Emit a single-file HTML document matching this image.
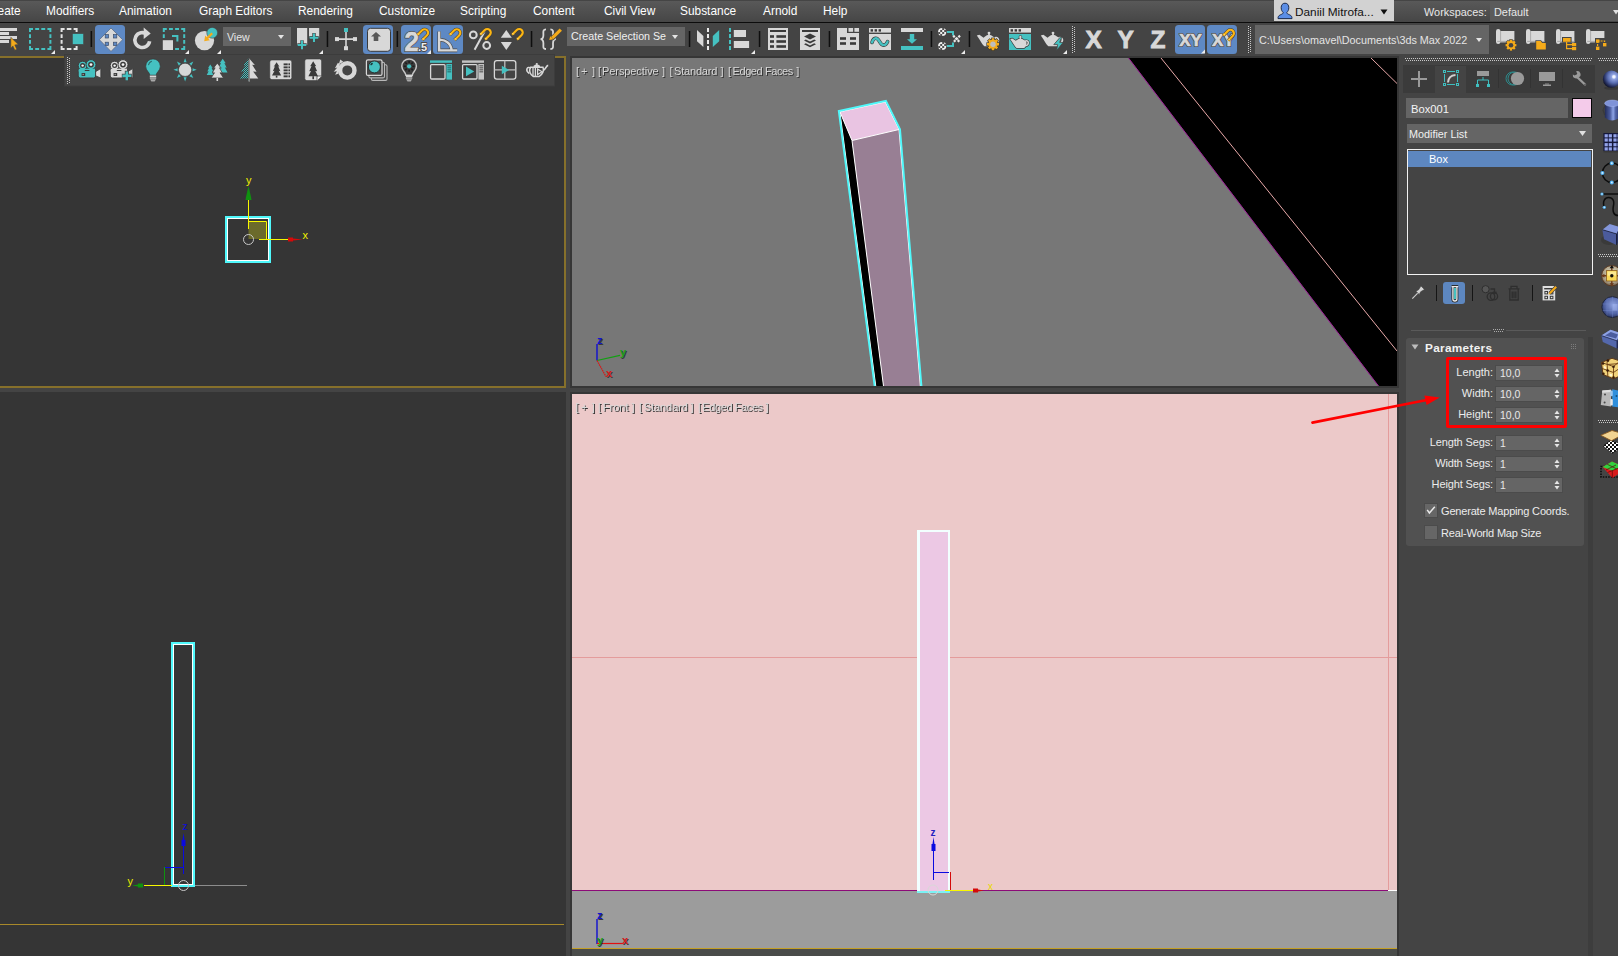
<!DOCTYPE html>
<html lang="en">
<head>
<meta charset="utf-8">
<title>3ds Max - Box Parameters</title>
<style>
html,body{margin:0;padding:0;}
body{width:1618px;height:956px;overflow:hidden;background:#444444;position:relative;
 font-family:"Liberation Sans",sans-serif;font-size:12px;color:#e6e6e6;}
.abs{position:absolute;}
#menubar{left:0;top:0;width:1618px;height:22px;background:linear-gradient(#454545 0px,#454545 1px,#595959 1px,#565656 4px,#464646 22px);}
#menuline{left:0;top:22px;width:1618px;height:1px;background:#0c0c0c;}
.mi{position:absolute;top:4px;font-size:11.9px;color:#ffffff;white-space:nowrap;line-height:15px;}
#user{left:1274px;top:0;width:120px;height:21px;background:#d2d2d2;color:#111;}
#user span{position:absolute;left:21px;top:5px;font-size:11.8px;line-height:15px;white-space:nowrap;}
#wsdd{left:1490px;top:1px;width:128px;height:20px;background:#5b5b5b;}
.dd{position:absolute;background:#656565;color:#e2e2e2;white-space:nowrap;overflow:hidden;}
.vp{position:absolute;overflow:hidden;}
.vlabel{position:absolute;font-size:11px;white-space:nowrap;line-height:13px;color:#d8d8d8;text-shadow:1px 1px 0 #333333;}
.vt{position:absolute;top:0;white-space:pre;}
.lbl{position:absolute;font-size:11px;color:#ececec;white-space:nowrap;line-height:13px;text-align:right;}
.spin{position:absolute;width:66px;height:14px;background:#656565;box-shadow:0 0 0 1px #4b4b4b;}
.spin span{position:absolute;left:4px;top:1px;font-size:10.5px;line-height:13px;color:#e8e8e8;}
svg{position:absolute;overflow:visible;}
</style>
</head>
<body>

<!-- ===== MENU BAR ===== -->
<div id="menubar" class="abs"></div>
<div id="menuline" class="abs"></div>
<div class="mi" style="left:-15px">Create</div>
<div class="mi" style="left:46px">Modifiers</div>
<div class="mi" style="left:119px">Animation</div>
<div class="mi" style="left:199px">Graph Editors</div>
<div class="mi" style="left:298px">Rendering</div>
<div class="mi" style="left:379px">Customize</div>
<div class="mi" style="left:460px">Scripting</div>
<div class="mi" style="left:533px">Content</div>
<div class="mi" style="left:604px">Civil View</div>
<div class="mi" style="left:680px">Substance</div>
<div class="mi" style="left:763px">Arnold</div>
<div class="mi" style="left:823px">Help</div>
<div id="user" class="abs"><span>Daniil Mitrofa...</span>
<svg width="16" height="18" viewBox="0 0 16 18" style="left:3px;top:2px"><path d="M8 1.200C10.600 1.200 11.800 3.200 11.800 5.600C11.800 8 10.800 9.600 9.800 10.400C9.800 11.600 10.600 12 12.600 12.800C14.400 13.600 15 14.600 15 16.600H1C1 14.600 1.600 13.600 3.400 12.800C5.400 12 6.200 11.600 6.200 10.400C5.200 9.600 4.200 8 4.200 5.600C4.200 3.200 5.400 1.200 8 1.200Z" fill="#5b8ee6" stroke="#1c2c50" stroke-width="1"/></svg>
<svg width="8" height="6" viewBox="0 0 8 6" style="left:106px;top:9px"><polygon points="0.500,0.500 7.500,0.500 4,5.500" fill="#101010"/></svg></div>
<div class="mi" style="left:1424px;top:5px;font-size:10.9px;color:#e8e8e8">Workspaces:</div>
<div id="wsdd" class="abs"><svg width="6" height="5" viewBox="0 0 6 5" style="left:123px;top:9px"><polygon points="0,0 6,0 3,4.500" fill="#e0e0e0"/></svg><span class="abs" style="left:4px;top:4px;font-size:10.9px;line-height:15px;color:#e8e8e8">Default</span></div>

<!-- ===== MAIN TOOLBAR ===== -->
<!--TB-START-->
<svg id="tb" width="1618" height="33" viewBox="0 23 1618 33" style="left:0;top:23px">
<rect x="-2" y="28" width="19" height="3" fill="#d8d8d8"/>
<rect x="-2" y="32" width="11" height="3" fill="#d8d8d8"/>
<rect x="-2" y="36" width="19" height="3" fill="#d8d8d8"/>
<rect x="-2" y="40" width="11" height="3" fill="#d8d8d8"/>
<path d="M10.800 37.300L18.300 44.500L14.800 44.900L16.800 49.300L14.800 50.200L12.900 45.900L10.800 48.300Z" fill="#f5ab1a" stroke="#444" stroke-width="0.600"/>
<path d="M29 29H33M29 49H33M47.400 29H51.400M47.400 49H51.400M35.200 29H39.100M35.200 49H39.100M41.300 29H45.200M41.300 49H45.200M30 28V32M50.400 28V32M30 46V50M50.400 46V50M30 34.200V37.900M50.400 34.200V37.900M30 40.100V43.800M50.400 40.100V43.800" fill="none" stroke="#45c1c1" stroke-width="2"/>
<polygon points="55,50 55,54 51,54" fill="#ececec"/>
<path d="M60.600 29H64.600M60.600 49H64.600M73.600 29H77.600M73.600 49H77.600M66.800 29H71.400M66.800 49H71.400M61.600 28V32M76.600 28V32M61.600 46V50M76.600 46V50M61.600 34.200V37.900M76.600 34.200V37.900M61.600 40.100V43.800M76.600 40.100V43.800" fill="none" stroke="#e4e4e4" stroke-width="2"/>
<rect x="72.500" y="33.700" width="11" height="10.600" fill="#45c1c1" stroke="#444" stroke-width="0.500"/>
<rect x="90.6" y="31" width="1.500" height="16" fill="#0e0e0e"/>
<rect x="95" y="25" width="30" height="29" rx="3.500" fill="#5e89c4"/>
<polygon points="111,28 122.600,39.700 111,51.400 99.400,39.700" fill="#d8d8d8" stroke="#44556f" stroke-width="0.600"/>
<rect x="105.2" y="34.6" width="3.400" height="3.400" fill="#5e89c4" stroke="#3d4d6a" stroke-width="0.700"/>
<rect x="113.4" y="34.6" width="3.400" height="3.400" fill="#5e89c4" stroke="#3d4d6a" stroke-width="0.700"/>
<rect x="105.2" y="42.2" width="3.400" height="3.400" fill="#5e89c4" stroke="#3d4d6a" stroke-width="0.700"/>
<rect x="113.4" y="42.2" width="3.400" height="3.400" fill="#5e89c4" stroke="#3d4d6a" stroke-width="0.700"/>
<path d="M146.800 34.200A7.400 7.400 0 1 0 149.600 41.300" fill="none" stroke="#d8d8d8" stroke-width="3.600"/>
<polygon points="143.700,27.600 150.700,33.500 143.700,39" fill="#d8d8d8"/>
<path d="M162.800 29H166.800M162.800 49H166.800M181.200 29H185.200M181.200 49H185.200M169 29H172.900M169 49H172.900M175.100 29H179M175.100 49H179M163.800 28V32M184.200 28V32M163.800 46V50M184.200 46V50M163.800 34.200V37.900M184.200 34.200V37.900M163.800 40.100V43.800M184.200 40.100V43.800" fill="none" stroke="#45c1c1" stroke-width="2"/>
<rect x="161.800" y="39.200" width="12.200" height="11.800" fill="#444"/>
<rect x="162.800" y="40.200" width="10.200" height="9.800" fill="#d8d8d8"/>
<path d="M172 36h5.400v5.400" fill="none" stroke="#45c1c1" stroke-width="2"/>
<polygon points="189,50 189,54 185,54" fill="#ececec"/>
<circle cx="204.500" cy="40.600" r="9.600" fill="#d8d8d8"/>
<circle cx="212.200" cy="32.800" r="5.400" fill="#45c1c1" stroke="#444" stroke-width="0.600"/>
<path d="M212.200 33.200L207 38.400" stroke="#f5ab1a" stroke-width="2.200"/><polygon points="204.200,41.200 205.200,35.600 209.800,40.200" fill="#f5ab1a"/>
<polygon points="221,50 221,54 217,54" fill="#ececec"/>
<rect x="223" y="27" width="68" height="19" fill="#656565"/>
<polygon points="278,35 284,35 281,39" fill="#e4e4e4"/>
<rect x="297" y="28" width="10.200" height="17" fill="#d8d8d8"/>
<rect x="309" y="28" width="10.200" height="9.500" fill="#d8d8d8"/>
<path d="M302 40.200v9.400M297.300 44.900h9.400" stroke="#444" stroke-width="3.400" fill="none"/>
<path d="M314 33v9.400M309.300 37.700h9.400" stroke="#444" stroke-width="3.400" fill="none"/>
<path d="M302 40.600v8.600M297.700 44.900h8.600" stroke="#45c1c1" stroke-width="2" fill="none"/>
<path d="M314 33.400v8.600M309.700 37.700h8.600" stroke="#45c1c1" stroke-width="2" fill="none"/>
<polygon points="323,50 323,54 319,54" fill="#ececec"/>
<rect x="326.7" y="31" width="1.500" height="16" fill="#0e0e0e"/>
<path d="M346 30v18M337 39.100h18" stroke="#d8d8d8" stroke-width="1.600" fill="none"/>
<rect x="335" y="37.100" width="4" height="4" fill="#d8d8d8"/><rect x="353" y="37.100" width="4" height="4" fill="#d8d8d8"/><rect x="344" y="46.200" width="4" height="4" fill="#d8d8d8"/>
<rect x="344" y="28" width="4" height="4" fill="#45c1c1"/>
<rect x="363" y="25" width="30" height="29" rx="3.500" fill="#5e89c4"/>
<rect x="367.500" y="28.300" width="23" height="23" rx="3" fill="#d8d8d8" stroke="#3a3a3a" stroke-width="1"/>
<polygon points="376,32 381,36.600 378.300,36.600 378.300,41 373.700,41 373.700,36.600 371,36.600" fill="#585858"/>
<rect x="396.6" y="31" width="1.500" height="16" fill="#0e0e0e"/>
<rect x="401" y="25" width="30" height="29" rx="3.500" fill="#5e89c4"/>
<text x="404.300" y="51" font-family="Liberation Sans, sans-serif" font-size="27" font-weight="bold" fill="#4a4a4a" stroke="#4a4a4a" stroke-width="1.800" stroke-linejoin="round">2</text>
<text x="404.300" y="51" font-family="Liberation Sans, sans-serif" font-size="27" font-weight="bold" fill="#d8d8d8" stroke="#d8d8d8" stroke-width="0.400">2</text>
<text x="418" y="51" font-family="Liberation Sans, sans-serif" font-size="11" font-weight="bold" fill="#4a4a4a" stroke="#4a4a4a" stroke-width="1.800" stroke-linejoin="round">.5</text>
<text x="418" y="51" font-family="Liberation Sans, sans-serif" font-size="11" font-weight="bold" fill="#f0f0f0">.5</text>
<g transform="translate(423.9 33.5) rotate(45) scale(1.0)"><path d="M-3.500 5.600V-1A3.500 3.500 0 0 1 3.500 -1V5.600" fill="none" stroke="#3d3a33" stroke-width="3.200"/><path d="M-3.500 5.600V-1A3.500 3.500 0 0 1 3.500 -1V5.600" fill="none" stroke="#fdb612" stroke-width="2.200"/><path d="M-4.600 4.200h2.200M2.400 4.200h2.200" stroke="#fbe3a2" stroke-width="0.800"/></g>
<polygon points="431,50 431,54 427,54" fill="#ececec"/>
<rect x="433" y="25" width="30" height="29" rx="3.500" fill="#5e89c4"/>
<path d="M439.200 31.600V50.400H457.200M439.200 40A11 11 0 0 1 451.600 50.400" fill="none" stroke="#4a4a4a" stroke-width="3.600"/>
<path d="M439.200 31.600V50.400H457.200M439.200 40A11 11 0 0 1 451.600 50.400" fill="none" stroke="#d8d8d8" stroke-width="2.400"/>
<g transform="translate(456.1 33.5) rotate(45) scale(1.0)"><path d="M-3.500 5.600V-1A3.500 3.500 0 0 1 3.500 -1V5.600" fill="none" stroke="#3d3a33" stroke-width="3.200"/><path d="M-3.500 5.600V-1A3.500 3.500 0 0 1 3.500 -1V5.600" fill="none" stroke="#fdb612" stroke-width="2.200"/><path d="M-4.600 4.200h2.200M2.400 4.200h2.200" stroke="#fbe3a2" stroke-width="0.800"/></g>
<circle cx="473.300" cy="34.900" r="3.400" fill="none" stroke="#d8d8d8" stroke-width="2"/>
<circle cx="486.700" cy="45.500" r="3.400" fill="none" stroke="#d8d8d8" stroke-width="2"/>
<path d="M484.800 31L474.600 49.800" stroke="#d8d8d8" stroke-width="2"/>
<g transform="translate(486.55 33.2) rotate(45) scale(1.0)"><path d="M-3.500 5.600V-1A3.500 3.500 0 0 1 3.500 -1V5.600" fill="none" stroke="#3d3a33" stroke-width="3.200"/><path d="M-3.500 5.600V-1A3.500 3.500 0 0 1 3.500 -1V5.600" fill="none" stroke="#fdb612" stroke-width="2.200"/><path d="M-4.600 4.200h2.200M2.400 4.200h2.200" stroke="#fbe3a2" stroke-width="0.800"/></g>
<polygon points="506.300,30 511.800,37.700 500.800,37.700" fill="#d8d8d8"/><polygon points="500.800,42.100 511.800,42.100 506.300,50.100" fill="#d8d8d8"/>
<g transform="translate(518.5 33.2) rotate(45) scale(1.0)"><path d="M-3.500 5.600V-1A3.500 3.500 0 0 1 3.500 -1V5.600" fill="none" stroke="#3d3a33" stroke-width="3.200"/><path d="M-3.500 5.600V-1A3.500 3.500 0 0 1 3.500 -1V5.600" fill="none" stroke="#fdb612" stroke-width="2.200"/><path d="M-4.600 4.200h2.200M2.400 4.200h2.200" stroke="#fbe3a2" stroke-width="0.800"/></g>
<rect x="530.8" y="31" width="1.500" height="16" fill="#0e0e0e"/>
<path d="M546 29.400C542.600 29.400 543.400 32 543.400 35C543.400 38 542.600 39 540.600 39.200C542.600 39.400 543.400 40.400 543.400 43.400C543.400 46.400 542.600 49 546 49" fill="none" stroke="#d8d8d8" stroke-width="1.800"/>
<path d="M550.400 29.400C553.800 29.400 553 32 553 35C553 38 553.800 39 555.800 39.200C553.800 39.400 553 40.400 553 43.400C553 46.400 553.800 49 550.400 49" fill="none" stroke="#d8d8d8" stroke-width="1.800"/>
<path d="M560.800 29.800L551.800 38.600" stroke="#444" stroke-width="4.600"/><path d="M560.800 29.600L552.400 37.800" stroke="#f5ab1a" stroke-width="3.200"/><polygon points="549.200,40 550.300,36.200 553.600,39.300" fill="#f5ab1a"/>
<rect x="567" y="27" width="118" height="19" fill="#656565"/>
<polygon points="672,35 678,35 675,39" fill="#e4e4e4"/>
<rect x="688.8" y="31" width="1.500" height="16" fill="#0e0e0e"/>
<polygon points="697,30 703.400,36 703.400,47 697,41.300" fill="#d8d8d8"/>
<line x1="708" y1="28" x2="708" y2="50.500" stroke="#ececec" stroke-width="2" stroke-dasharray="4 2"/>
<polygon points="712.800,36 719.200,30 719.200,41.300 712.800,47" fill="#45c1c1"/>
<line x1="730" y1="28" x2="730" y2="50.500" stroke="#45c1c1" stroke-width="2" stroke-dasharray="4 2"/>
<rect x="733.800" y="30" width="12.200" height="7" fill="#d8d8d8"/><rect x="733.800" y="41" width="15.300" height="7" fill="#d8d8d8"/>
<polygon points="755,50 755,54 751,54" fill="#ececec"/>
<rect x="758.8" y="31" width="1.500" height="16" fill="#0e0e0e"/>
<rect x="768" y="28" width="20" height="22" fill="#d8d8d8"/>
<rect x="770" y="30" width="16" height="2" fill="#3a3a3a"/>
<rect x="770" y="35.2" width="4" height="2.600" fill="#3a3a3a"/><rect x="776.400" y="35.2" width="9.600" height="2.600" fill="#3a3a3a"/>
<rect x="770" y="40.2" width="4" height="2.600" fill="#3a3a3a"/><rect x="776.400" y="40.2" width="9.600" height="2.600" fill="#3a3a3a"/>
<rect x="770" y="45.2" width="4" height="2.600" fill="#3a3a3a"/><rect x="776.400" y="45.2" width="9.600" height="2.600" fill="#3a3a3a"/>
<rect x="800" y="28" width="20" height="22" fill="#d8d8d8"/>
<rect x="802" y="30" width="16" height="2" fill="#3a3a3a"/>
<polygon points="804,36.600 810,33.600 816,36.600 810,39.600" fill="#3a3a3a"/>
<polygon points="804,40.4 805.800,39.5 810,41.6 814.200,39.5 816,40.4 810,43.4" fill="#3a3a3a"/>
<polygon points="804,44.2 805.800,43.300000000000004 810,45.400000000000006 814.200,43.300000000000004 816,44.2 810,47.2" fill="#3a3a3a"/>
<rect x="828.7" y="31" width="1.500" height="16" fill="#0e0e0e"/>
<path d="M837 28H847V33H859V50H837Z" fill="#d8d8d8"/><rect x="848.500" y="28" width="4.600" height="3.800" fill="#d8d8d8"/><rect x="854.400" y="28" width="4.600" height="3.800" fill="#d8d8d8"/>
<rect x="840" y="37.2" width="6" height="2.600" fill="#3a3a3a"/>
<rect x="850" y="37.2" width="6" height="2.600" fill="#3a3a3a"/>
<rect x="840" y="42.2" width="6" height="2.600" fill="#3a3a3a"/>
<rect x="850" y="42.2" width="6" height="2.600" fill="#3a3a3a"/>
<rect x="869" y="28" width="22" height="4.600" fill="#d8d8d8"/><rect x="869" y="34" width="22" height="16" fill="#d8d8d8"/>
<rect x="870.6" y="29.200" width="2.400" height="2.400" fill="#3a3a3a"/>
<rect x="874.6" y="29.200" width="2.400" height="2.400" fill="#3a3a3a"/>
<rect x="878.6" y="29.200" width="2.400" height="2.400" fill="#3a3a3a"/>
<path d="M872 42.400C873.400 37.400 877 36.800 879.600 41.600C881.800 45.800 885.400 46.800 887.600 41.600" fill="none" stroke="#3a3a3a" stroke-width="3.600" stroke-linecap="round"/>
<path d="M872 42.400C873.400 37.400 877 36.800 879.600 41.600C881.800 45.800 885.400 46.800 887.600 41.600" fill="none" stroke="#45c1c1" stroke-width="2.400" stroke-linecap="round"/>
<rect x="901" y="28" width="22" height="4" fill="#d8d8d8"/><rect x="901" y="46" width="22" height="4" fill="#45c1c1"/>
<polygon points="909.800,34 914.200,34 914.200,39.200 917,39.200 912,43.800 907,39.200 909.800,39.200" fill="#45c1c1"/>
<rect x="930.7" y="31" width="1.500" height="16" fill="#0e0e0e"/>
<circle cx="942.200" cy="32" r="4.100" fill="#f0f0f0"/>
<rect x="938.200" y="32" width="2" height="2" fill="#505050"/>
<rect x="940.200" y="30" width="2" height="2" fill="#505050"/>
<rect x="940.200" y="34" width="2" height="2" fill="#505050"/>
<rect x="942.200" y="28" width="2" height="2" fill="#505050"/>
<rect x="942.200" y="32" width="2" height="2" fill="#505050"/>
<rect x="944.200" y="30" width="2" height="2" fill="#505050"/>
<circle cx="942.200" cy="46" r="4.100" fill="#f0f0f0"/>
<rect x="938.200" y="46" width="2" height="2" fill="#505050"/>
<rect x="940.200" y="44" width="2" height="2" fill="#505050"/>
<rect x="940.200" y="48" width="2" height="2" fill="#505050"/>
<rect x="942.200" y="42" width="2" height="2" fill="#505050"/>
<rect x="942.200" y="46" width="2" height="2" fill="#505050"/>
<rect x="944.200" y="44" width="2" height="2" fill="#505050"/>
<path d="M947 32H953V35.400M947 46H953V42.600" fill="none" stroke="#45c1c1" stroke-width="2"/>
<path d="M953.200 35.600L960 42.400M960 35.600L953.200 42.400" stroke="#e8e8e8" stroke-width="2.200" stroke-dasharray="2.200 1"/>
<polygon points="965,50 965,54 961,54" fill="#ececec"/>
<rect x="968.7" y="31" width="1.500" height="16" fill="#0e0e0e"/>
<g transform="translate(989 40) scale(1.0)"><path d="M5.800 -2.200C10.800 -3.600 10.400 3.200 6 3.600" fill="none" stroke="#d8d8d8" stroke-width="1.700"/><path d="M-12.200 -4.600L-9.600 -5.200L-5.400 -2.300L-4.300 -3.300Q0 -7.200 4.300 -3.300L6 -2.500C8.200 -0.800 7.600 3.600 4.600 6.200H-4.600C-6.600 4.600 -8.200 1 -12.200 -4.600Z" fill="#d8d8d8"/><circle cx="0" cy="-6.900" r="1.400" fill="#d8d8d8"/><rect x="-0.800" y="-6.500" width="1.600" height="2" fill="#d8d8d8"/></g>
<circle cx="993" cy="44.2" r="5.16" fill="#3b382f"/><rect x="991.14" y="37.600" width="3.72" height="3" fill="#3b382f" transform="rotate(0 993 44.2)"/><rect x="991.14" y="37.600" width="3.72" height="3" fill="#3b382f" transform="rotate(45 993 44.2)"/><rect x="991.14" y="37.600" width="3.72" height="3" fill="#3b382f" transform="rotate(90 993 44.2)"/><rect x="991.14" y="37.600" width="3.72" height="3" fill="#3b382f" transform="rotate(135 993 44.2)"/><rect x="991.14" y="37.600" width="3.72" height="3" fill="#3b382f" transform="rotate(180 993 44.2)"/><rect x="991.14" y="37.600" width="3.72" height="3" fill="#3b382f" transform="rotate(225 993 44.2)"/><rect x="991.14" y="37.600" width="3.72" height="3" fill="#3b382f" transform="rotate(270 993 44.2)"/><rect x="991.14" y="37.600" width="3.72" height="3" fill="#3b382f" transform="rotate(315 993 44.2)"/><circle cx="993" cy="44.2" r="4.56" fill="#f5ab1a"/><rect x="991.74" y="38.200" width="2.52" height="3" fill="#f5ab1a" transform="rotate(0 993 44.2)"/><rect x="991.74" y="38.200" width="2.52" height="3" fill="#f5ab1a" transform="rotate(45 993 44.2)"/><rect x="991.74" y="38.200" width="2.52" height="3" fill="#f5ab1a" transform="rotate(90 993 44.2)"/><rect x="991.74" y="38.200" width="2.52" height="3" fill="#f5ab1a" transform="rotate(135 993 44.2)"/><rect x="991.74" y="38.200" width="2.52" height="3" fill="#f5ab1a" transform="rotate(180 993 44.2)"/><rect x="991.74" y="38.200" width="2.52" height="3" fill="#f5ab1a" transform="rotate(225 993 44.2)"/><rect x="991.74" y="38.200" width="2.52" height="3" fill="#f5ab1a" transform="rotate(270 993 44.2)"/><rect x="991.74" y="38.200" width="2.52" height="3" fill="#f5ab1a" transform="rotate(315 993 44.2)"/><circle cx="993" cy="44.2" r="2.7" fill="#bdbdbd"/>
<rect x="1009" y="28" width="22" height="4.600" fill="#d8d8d8"/><rect x="1009" y="34" width="22" height="16" fill="#45c1c1"/>
<rect x="1010.6" y="29.200" width="2.400" height="2.400" fill="#3a3a3a"/>
<rect x="1014.6" y="29.200" width="2.400" height="2.400" fill="#3a3a3a"/>
<rect x="1018.6" y="29.200" width="2.400" height="2.400" fill="#3a3a3a"/>
<g transform="translate(1020.4 42.8) scale(0.84)"><path d="M5.800 -2.200C10.800 -3.600 10.400 3.200 6 3.600" fill="none" stroke="#3a3a3a" stroke-width="3.200"/><path d="M-12.200 -4.600L-9.600 -5.200L-5.400 -2.300L-4.300 -3.300Q0 -7.200 4.300 -3.300L6 -2.500C8.200 -0.800 7.600 3.600 4.600 6.200H-4.600C-6.600 4.600 -8.200 1 -12.200 -4.600Z" fill="#3a3a3a" stroke="#3a3a3a" stroke-width="1.600" stroke-linejoin="round"/><circle cx="0" cy="-6.900" r="2.100" fill="#3a3a3a"/><path d="M5.800 -2.200C10.800 -3.600 10.400 3.200 6 3.600" fill="none" stroke="#d8d8d8" stroke-width="1.700"/><path d="M-12.200 -4.600L-9.600 -5.200L-5.400 -2.300L-4.300 -3.300Q0 -7.200 4.300 -3.300L6 -2.500C8.200 -0.800 7.600 3.600 4.600 6.200H-4.600C-6.600 4.600 -8.200 1 -12.200 -4.600Z" fill="#d8d8d8"/><circle cx="0" cy="-6.900" r="1.400" fill="#d8d8d8"/><rect x="-0.800" y="-6.500" width="1.600" height="2" fill="#d8d8d8"/></g>
<g transform="translate(1053 40) scale(1.0)"><path d="M5.800 -2.200C10.800 -3.600 10.400 3.200 6 3.600" fill="none" stroke="#d8d8d8" stroke-width="1.700"/><path d="M-12.200 -4.600L-9.600 -5.200L-5.400 -2.300L-4.300 -3.300Q0 -7.200 4.300 -3.300L6 -2.500C8.200 -0.800 7.600 3.600 4.600 6.200H-4.600C-6.600 4.600 -8.200 1 -12.200 -4.600Z" fill="#d8d8d8"/><circle cx="0" cy="-6.900" r="1.400" fill="#d8d8d8"/><rect x="-0.800" y="-6.500" width="1.600" height="2" fill="#d8d8d8"/></g>
<polygon points="1060.200,37.200 1053.800,44.600 1057.600,44.600 1056.600,50.600 1063.200,42.400 1059.600,42.400 1061.800,37.200" fill="#45c1c1" stroke="#444" stroke-width="0.800"/>
<polygon points="1067,50 1067,54 1063,54" fill="#ececec"/>
<line x1="1072.5" y1="26" x2="1072.5" y2="53" stroke="#c8c8c8" stroke-width="1" stroke-dasharray="1 1"/><line x1="1074.5" y1="27" x2="1074.5" y2="53" stroke="#c8c8c8" stroke-width="1" stroke-dasharray="1 1"/>
<text x="1085.6" y="47.700" font-family="Liberation Sans, sans-serif" font-size="24.400" font-weight="bold" fill="#d8d8d8" stroke="#d8d8d8" stroke-width="0.900">X</text>
<text x="1117.6" y="47.700" font-family="Liberation Sans, sans-serif" font-size="24.400" font-weight="bold" fill="#d8d8d8" stroke="#d8d8d8" stroke-width="0.900">Y</text>
<text x="1150.4" y="47.700" font-family="Liberation Sans, sans-serif" font-size="24.400" font-weight="bold" fill="#d8d8d8" stroke="#d8d8d8" stroke-width="0.900">Z</text>
<rect x="1175" y="25" width="30" height="29" rx="3.500" fill="#5e89c4"/>
<text x="1179.200" y="46.200" font-family="Liberation Sans, sans-serif" font-size="17" font-weight="bold" fill="#4a4a4a" stroke="#4a4a4a" stroke-width="2.200" stroke-linejoin="round">XY</text>
<text x="1179.200" y="46.200" font-family="Liberation Sans, sans-serif" font-size="17" font-weight="bold" fill="#d8d8d8" stroke="#d8d8d8" stroke-width="0.700">XY</text>
<polygon points="1205,49.5 1205,53.5 1201,53.5" fill="#ececec"/>
<rect x="1207" y="25" width="30" height="29" rx="3.500" fill="#5e89c4"/>
<text x="1211.900" y="46.200" font-family="Liberation Sans, sans-serif" font-size="17" font-weight="bold" fill="#4a4a4a" stroke="#4a4a4a" stroke-width="2.200" stroke-linejoin="round">XY</text>
<text x="1211.900" y="46.200" font-family="Liberation Sans, sans-serif" font-size="17" font-weight="bold" fill="#d8d8d8" stroke="#d8d8d8" stroke-width="0.700">XY</text>
<g transform="translate(1229.7 34.05) rotate(45) scale(1.0)"><path d="M-3.500 5.600V-1A3.500 3.500 0 0 1 3.500 -1V5.600" fill="none" stroke="#3d3a33" stroke-width="3.200"/><path d="M-3.500 5.600V-1A3.500 3.500 0 0 1 3.500 -1V5.600" fill="none" stroke="#fdb612" stroke-width="2.200"/><path d="M-4.600 4.200h2.200M2.400 4.200h2.200" stroke="#fbe3a2" stroke-width="0.800"/></g>
<line x1="1248.5" y1="26" x2="1248.5" y2="53" stroke="#c8c8c8" stroke-width="1" stroke-dasharray="1 1"/><line x1="1250.5" y1="27" x2="1250.5" y2="53" stroke="#c8c8c8" stroke-width="1" stroke-dasharray="1 1"/>
<rect x="1255" y="25" width="234" height="29" fill="#656565"/>
<polygon points="1476,38 1482,38 1479,42" fill="#e4e4e4"/>
<rect x="1499" y="31" width="15.400" height="11.400" fill="#d8d8d8"/><rect x="1496" y="29" width="4.400" height="15" rx="2.200" fill="#d8d8d8"/><path d="M1497.2 41.400H1514.4" stroke="#9a9a9a" stroke-width="0.800"/><path d="M1500.6 30.500V41" stroke="#9a9a9a" stroke-width="0.700"/>
<circle cx="1511" cy="45.2" r="4.700" fill="#444"/><rect x="1509.27" y="39.200" width="3.47" height="2.700" fill="#444" transform="rotate(0 1511 45.2)"/><rect x="1509.27" y="39.200" width="3.47" height="2.700" fill="#444" transform="rotate(45 1511 45.2)"/><rect x="1509.27" y="39.200" width="3.47" height="2.700" fill="#444" transform="rotate(90 1511 45.2)"/><rect x="1509.27" y="39.200" width="3.47" height="2.700" fill="#444" transform="rotate(135 1511 45.2)"/><rect x="1509.27" y="39.200" width="3.47" height="2.700" fill="#444" transform="rotate(180 1511 45.2)"/><rect x="1509.27" y="39.200" width="3.47" height="2.700" fill="#444" transform="rotate(225 1511 45.2)"/><rect x="1509.27" y="39.200" width="3.47" height="2.700" fill="#444" transform="rotate(270 1511 45.2)"/><rect x="1509.27" y="39.200" width="3.47" height="2.700" fill="#444" transform="rotate(315 1511 45.2)"/><circle cx="1511" cy="45.2" r="4.100" fill="#f5ab1a"/><rect x="1509.87" y="39.800" width="2.27" height="2.700" fill="#f5ab1a" transform="rotate(0 1511 45.2)"/><rect x="1509.87" y="39.800" width="2.27" height="2.700" fill="#f5ab1a" transform="rotate(45 1511 45.2)"/><rect x="1509.87" y="39.800" width="2.27" height="2.700" fill="#f5ab1a" transform="rotate(90 1511 45.2)"/><rect x="1509.87" y="39.800" width="2.27" height="2.700" fill="#f5ab1a" transform="rotate(135 1511 45.2)"/><rect x="1509.87" y="39.800" width="2.27" height="2.700" fill="#f5ab1a" transform="rotate(180 1511 45.2)"/><rect x="1509.87" y="39.800" width="2.27" height="2.700" fill="#f5ab1a" transform="rotate(225 1511 45.2)"/><rect x="1509.87" y="39.800" width="2.27" height="2.700" fill="#f5ab1a" transform="rotate(270 1511 45.2)"/><rect x="1509.87" y="39.800" width="2.27" height="2.700" fill="#f5ab1a" transform="rotate(315 1511 45.2)"/><circle cx="1511" cy="45.2" r="2.3" fill="#444"/>
<rect x="1529" y="31" width="15.400" height="11.400" fill="#d8d8d8"/><rect x="1526" y="29" width="4.400" height="15" rx="2.200" fill="#d8d8d8"/><path d="M1527.2 41.400H1544.4" stroke="#9a9a9a" stroke-width="0.800"/><path d="M1530.6 30.500V41" stroke="#9a9a9a" stroke-width="0.700"/>
<path d="M1535.400 40.200H1541L1542.600 42.200H1546.600V50.200H1535.400Z" fill="#444"/>
<path d="M1536.200 41H1540.600L1542.200 43H1545.800V49.600H1536.200Z" fill="#f5ab1a"/>
<rect x="1559" y="31" width="15.400" height="11.400" fill="#d8d8d8"/><rect x="1556" y="29" width="4.400" height="15" rx="2.200" fill="#d8d8d8"/><path d="M1557.2 41.400H1574.4" stroke="#9a9a9a" stroke-width="0.800"/><path d="M1560.6 30.500V41" stroke="#9a9a9a" stroke-width="0.700"/>
<rect x="1562" y="37" width="9.600" height="5.600" fill="#444"/><rect x="1563" y="38" width="7.600" height="3.800" fill="#f5ab1a"/>
<path d="M1566.600 42V48.600H1572M1566.600 44.600H1572" fill="none" stroke="#f5ab1a" stroke-width="1.200"/>
<rect x="1572" y="43" width="4.200" height="3.200" fill="#f5ab1a"/><rect x="1572" y="47" width="4.200" height="3.200" fill="#f5ab1a"/>
<rect x="1589" y="31" width="15.400" height="11.400" fill="#d8d8d8"/><rect x="1586" y="29" width="4.400" height="15" rx="2.200" fill="#d8d8d8"/><path d="M1587.2 41.400H1604.4" stroke="#9a9a9a" stroke-width="0.800"/><path d="M1590.6 30.500V41" stroke="#9a9a9a" stroke-width="0.700"/>
<rect x="1595" y="38" width="12" height="13" fill="#444"/>
<path d="M1597.600 41V48M1597.600 41H1604.600V44" fill="none" stroke="#f5ab1a" stroke-width="1.200" stroke-dasharray="2 1"/>
<rect x="1596" y="39.400" width="3.400" height="3.400" fill="#f5ab1a"/><rect x="1596" y="46.600" width="3.400" height="3.400" fill="#f5ab1a"/><rect x="1603" y="43" width="3.400" height="3.400" fill="#f5ab1a"/>
</svg>
<!--TB-END-->
<div class="abs" style="left:227px;top:31px;font-size:10.6px;line-height:13px;color:#e4e4e4;white-space:nowrap">View</div>
<div class="abs" style="left:571px;top:30px;font-size:10.7px;line-height:13px;color:#f0f0f0;white-space:nowrap">Create Selection Se</div>
<div class="abs" style="left:1259px;top:34px;font-size:10.8px;line-height:13px;color:#e4e4e4;white-space:nowrap">C:\Users\omavel\Documents\3ds Max 2022</div>

<!-- ===== VIEWPORTS ===== -->
<!-- top-left (Top view) with active gold border -->
<div class="vp" id="vpTL" style="left:0;top:56px;width:564px;height:330px;background:#353535;border-top:2px solid #86702b;border-right:2px solid #86702b;border-bottom:2px solid #86702b;box-sizing:content-box;height:328px;">
<svg width="564" height="328" viewBox="0 58 564 328" style="left:0;top:0">
  <rect x="226" y="217" width="44" height="45" fill="none" stroke="#4ff8fb" stroke-width="2"/>
  <rect x="227.500" y="218.500" width="41" height="42" fill="none" stroke="#ffffff" stroke-width="1"/>
  <rect x="248.500" y="222" width="18" height="17" fill="#6b6a2b"/>
  <polyline points="248.500,221.500 266.500,221.500 266.500,239.500" fill="none" stroke="#f8f800" stroke-width="1"/>
  <line x1="248.500" y1="199" x2="248.500" y2="229" stroke="#f8f800" stroke-width="1"/>
  <polygon points="248.500,186 246,197 245.500,200 251.500,200 251,197" fill="#0f920f"/>
  <line x1="259" y1="239.500" x2="289" y2="239.500" stroke="#f8f800" stroke-width="1"/>
  <polygon points="303,239.500 293,238.500 293,237.500 288,237.500 288,241.500 293,241.500 293,240.500" fill="#d40a0a"/>
  <circle cx="248.500" cy="239.500" r="5" fill="none" stroke="#c8c8c8" stroke-width="1"/>
  <text x="246" y="184" font-family="Liberation Sans, sans-serif" font-size="11" fill="#f0f000">y</text>
  <text x="302.500" y="239" font-family="Liberation Sans, sans-serif" font-size="11" fill="#f0f000">x</text>
</svg>
</div>
<!-- bottom-left (Left view) -->
<div class="vp" id="vpBL" style="left:0;top:392px;width:566px;height:564px;background:#353535;">
  <div class="abs" style="left:0;top:532px;width:564px;height:1px;background:#a8892a;"></div>
<svg width="566" height="564" viewBox="0 392 566 564" style="left:0;top:0">
  <line x1="195" y1="885.500" x2="247" y2="885.500" stroke="#8c8c8c" stroke-width="1"/>
  <rect x="172" y="643" width="22" height="243" fill="none" stroke="#4ff8fb" stroke-width="2"/>
  <rect x="173.500" y="644.500" width="19" height="240" fill="none" stroke="#ffffff" stroke-width="1"/>
  <line x1="144" y1="885.500" x2="172" y2="885.500" stroke="#f8f800" stroke-width="1"/>
  <polygon points="132,885.500 138,884.500 138,883.500 143,883.500 143,887.500 138,887.500 138,886.500" fill="#0f920f"/>
  <line x1="164.500" y1="867" x2="164.500" y2="885" stroke="#0f920f" stroke-width="1"/>
  <line x1="165" y1="867.500" x2="184" y2="867.500" stroke="#0a0ae0" stroke-width="1"/>
  <line x1="183.500" y1="845" x2="183.500" y2="874" stroke="#0a0ae0" stroke-width="1"/>
  <polygon points="183.500,833 182.500,840 181.500,840 181.500,846 185.500,846 185.500,840 184.500,840" fill="#0a0ae0"/>
  <circle cx="183.500" cy="885.500" r="5" fill="none" stroke="#c8c8c8" stroke-width="1"/>
  <text x="182.500" y="830" font-family="Liberation Sans, sans-serif" font-size="10" fill="#0a0ae0">z</text>
  <text x="127.500" y="885" font-family="Liberation Sans, sans-serif" font-size="11" fill="#f0f000">y</text>
</svg>
</div>
<!-- perspective -->
<div class="abs" style="left:570px;top:56px;width:829px;height:332px;background:#363636;"></div>
<div class="vp" id="vpP" style="left:572px;top:58px;width:825px;height:328px;background:#777777;">
<svg width="825" height="328" viewBox="572 58 825 328" style="left:0;top:0">
  <!-- black region on the right -->
  <polygon points="1128.5,58 1397,58 1397,386 1378.5,386" fill="#000000"/>
  <line x1="1128.5" y1="58" x2="1378.5" y2="386" stroke="#a0209a" stroke-width="1"/>
  <line x1="1161" y1="58" x2="1397" y2="351" stroke="#e8a9a9" stroke-width="1"/>
  <line x1="1371" y1="58" x2="1397" y2="83.500" stroke="#e8a9a9" stroke-width="1"/>
  <!-- box: dark side -->
  <polygon points="839.9,111.8 852,140.500 883.500,386 876,386" fill="#000000"/>
  <!-- box: front face -->
  <polygon points="852,140.500 899,129.500 920.500,386 883.500,386" fill="#987f94"/>
  <!-- box: top -->
  <polygon points="839.9,111.8 885.3,102 899,129.500 852,140.500" fill="#e9c4e2"/>
  <!-- white edges -->
  <polyline points="839.9,111.8 852,140.500 899,129.500" fill="none" stroke="#ffffff" stroke-width="1"/>
  <line x1="852" y1="140.500" x2="883.500" y2="386" stroke="#ffffff" stroke-width="1"/>
  <polyline points="876,388 839.9,111.8 885.3,102 899,129.500 920.500,388" fill="none" stroke="#ffffff" stroke-width="1"/>
  <!-- cyan selection outline -->
  <polyline points="874.9,388 838.8,111 885.9,100.800 900,129.300 921.600,388" fill="none" stroke="#4ff8fb" stroke-width="1.900" stroke-linejoin="miter"/>
  <!-- axis tripod -->
  <line x1="597" y1="360.500" x2="597" y2="344" stroke="#0f0fd2" stroke-width="1.400"/>
  <line x1="597" y1="360.500" x2="620" y2="355.300" stroke="#12a012" stroke-width="1.200"/>
  <line x1="597" y1="360.500" x2="606" y2="376.600" stroke="#d81818" stroke-width="1.200" stroke-dasharray="1.600 0.600"/>
  <text x="598" y="345" font-family="Liberation Sans, sans-serif" font-size="11" font-weight="bold" fill="#3a3a3a">z</text><text x="597" y="344" font-family="Liberation Sans, sans-serif" font-size="11" font-weight="bold" fill="#1414d0">z</text>
  <text x="621" y="356.500" font-family="Liberation Sans, sans-serif" font-size="11" font-weight="bold" fill="#3a3a3a">y</text><text x="620" y="355.500" font-family="Liberation Sans, sans-serif" font-size="11" font-weight="bold" fill="#18a018">y</text>
  <text x="607" y="378" font-family="Liberation Sans, sans-serif" font-size="11" font-weight="bold" fill="#3a3a3a">x</text><text x="606" y="377" font-family="Liberation Sans, sans-serif" font-size="11" font-weight="bold" fill="#d82020">x</text>
</svg>
<div class="vlabel" style="left:0;top:6.5px;will-change:transform;"><span class="vt" style="left:4.0px;">[</span><span class="vt" style="left:9.0px;">+</span><span class="vt" style="left:20.0px;">]</span><span class="vt" style="left:26.0px;">[</span><span class="vt" style="left:30.0px;letter-spacing:-0.08px;">Perspective</span><span class="vt" style="left:90.0px;">]</span><span class="vt" style="left:97.4px;">[</span><span class="vt" style="left:102.0px;letter-spacing:-0.18px;">Standard</span><span class="vt" style="left:148.6px;">]</span><span class="vt" style="left:156.0px;">[</span><span class="vt" style="left:160.5px;letter-spacing:-0.40px;">Edged Faces</span><span class="vt" style="left:224.3px;">]</span></div>
</div>
<!-- front -->
<div class="abs" style="left:570px;top:392px;width:829px;height:564px;background:#363636;"></div>
<div class="vp" id="vpF" style="left:572px;top:394px;width:825px;height:562px;background:#ecc9c9;">
  <div class="abs" style="left:0;top:497px;width:825px;height:58px;background:#9c9c9c;"></div>
  <div class="abs" style="left:0;top:554px;width:825px;height:1px;background:#c49f24;"></div>
  <div class="abs" style="left:0;top:555px;width:825px;height:7px;background:#4a4c4a;"></div>
  <div class="abs" style="left:0;top:263px;width:825px;height:1px;background:#e49c9c;"></div>
  <div class="abs" style="left:816px;top:0;width:1px;height:497px;background:#e49c9c;"></div>
  <div class="abs" style="left:0;top:496px;width:816px;height:1px;background:#8c0b78;"></div>
  <div class="abs" style="left:816px;top:496px;width:9px;height:1px;background:#ffffff;"></div>
<svg width="825" height="562" viewBox="572 394 825 562" style="left:0;top:0">
  <rect x="917" y="530" width="33" height="363" fill="#f2ffff"/>
  <rect x="920" y="532" width="28" height="359" fill="#ecc8e4"/>
  <rect x="917" y="891" width="33" height="2" fill="#7af2f4"/>
  <line x1="933.500" y1="850" x2="933.500" y2="880" stroke="#0a0ae0" stroke-width="1"/>
  <polygon points="933.500,837 932.500,844 931.500,844 931.500,851 935.500,851 935.500,844 934.500,844" fill="#0a0ae0"/>
  <line x1="933" y1="872.500" x2="949" y2="872.500" stroke="#0a0ae0" stroke-width="1"/>
  <line x1="950.500" y1="872" x2="950.500" y2="890" stroke="#d40a0a" stroke-width="1"/>
  <line x1="945" y1="890.500" x2="973" y2="890.500" stroke="#f8f800" stroke-width="1"/>
  <polygon points="984,890.500 978,889.500 978,888.500 973,888.500 973,892.500 978,892.500 978,891.500" fill="#d40a0a"/>
  <circle cx="933" cy="890" r="5" fill="none" stroke="#d8d8d8" stroke-width="1"/>
  <text x="930.500" y="836" font-family="Liberation Sans, sans-serif" font-size="10" font-weight="bold" fill="#2020c0">z</text>
  <text x="988" y="890" font-family="Liberation Sans, sans-serif" font-size="10" fill="#e8d800">x</text>
  <!-- tripod -->
  <line x1="597" y1="919" x2="597" y2="944" stroke="#0f0fd2" stroke-width="1.400"/>
  <line x1="597" y1="943.500" x2="623" y2="943.500" stroke="#e01010" stroke-width="1.200"/>
  <text x="598" y="920" font-family="Liberation Sans, sans-serif" font-size="11" font-weight="bold" fill="#3a3a3a">z</text><text x="597" y="919" font-family="Liberation Sans, sans-serif" font-size="11" font-weight="bold" fill="#1414d0">z</text>
  <text x="598" y="944.500" font-family="Liberation Sans, sans-serif" font-size="11" font-weight="bold" fill="#3a3a3a">y</text><text x="597" y="943.500" font-family="Liberation Sans, sans-serif" font-size="11" font-weight="bold" fill="#18a018">y</text>
  <text x="623" y="945" font-family="Liberation Sans, sans-serif" font-size="11" font-weight="bold" fill="#3a3a3a">x</text><text x="622" y="944" font-family="Liberation Sans, sans-serif" font-size="11" font-weight="bold" fill="#d82020">x</text>
</svg>
<div class="vlabel" style="left:0;top:6.5px;will-change:transform;"><span class="vt" style="left:3.5px;">[</span><span class="vt" style="left:9.0px;">+</span><span class="vt" style="left:19.8px;">]</span><span class="vt" style="left:26.0px;">[</span><span class="vt" style="left:30.8px;letter-spacing:0.00px;">Front</span><span class="vt" style="left:59.5px;">]</span><span class="vt" style="left:67.0px;">[</span><span class="vt" style="left:71.8px;letter-spacing:-0.08px;">Standard</span><span class="vt" style="left:118.6px;">]</span><span class="vt" style="left:126.0px;">[</span><span class="vt" style="left:130.3px;letter-spacing:-0.40px;">Edged Faces</span><span class="vt" style="left:193.5px;">]</span></div>
</div>

<!-- ===== FLOATING TOOLBAR ===== -->
<!--TB2-START-->
<svg id="tb2" width="1618" height="34" viewBox="0 54 1618 34" style="left:0;top:54px">
<rect x="64.500" y="54.500" width="490" height="31.500" fill="#444444" stroke="#3c3c3c" stroke-width="1"/>
<line x1="67.500" y1="57" x2="67.500" y2="84" stroke="#c8c8c8" stroke-width="1" stroke-dasharray="1 1"/><line x1="69.500" y1="58" x2="69.500" y2="84" stroke="#c8c8c8" stroke-width="1" stroke-dasharray="1 1"/>
<polygon points="94.2,72.4 100.80000000000001,68.6 100.80000000000001,78 94.2,75.2" fill="#d8d8d8" stroke="#3a3a3a" stroke-width="0.800"/><rect x="78.2" y="68.200" width="17.400" height="9.800" rx="2" fill="#45c1c1" stroke="#3a3a3a" stroke-width="1"/><circle cx="82.60000000000001" cy="65.600" r="4.400" fill="#45c1c1" stroke="#3a3a3a" stroke-width="1"/><circle cx="91.0" cy="64.600" r="5" fill="#45c1c1" stroke="#3a3a3a" stroke-width="1"/><rect x="78.8" y="68.800" width="16.200" height="3" fill="#45c1c1"/><circle cx="82.60000000000001" cy="65.600" r="2.500" fill="#3a3a3a"/><circle cx="82.60000000000001" cy="65.600" r="1.200" fill="#f4f4f4"/><circle cx="91.0" cy="64.600" r="2.900" fill="#3a3a3a"/><circle cx="91.0" cy="64.600" r="1.400" fill="#f4f4f4"/><rect x="81.60000000000001" y="73" width="3.600" height="3" fill="#3a3a3a"/><rect x="82.5" y="73.900" width="1.400" height="1.200" fill="#9a9a9a"/><rect x="84.8" y="70" width="4.600" height="1" fill="#3a3a3a"/>
<polygon points="126.2,72.4 132.8,68.6 132.8,78 126.2,75.2" fill="#d8d8d8" stroke="#3a3a3a" stroke-width="0.800"/><rect x="110.2" y="68.200" width="17.400" height="9.800" rx="2" fill="#d8d8d8" stroke="#3a3a3a" stroke-width="1"/><circle cx="114.60000000000001" cy="65.600" r="4.400" fill="#d8d8d8" stroke="#3a3a3a" stroke-width="1"/><circle cx="123.0" cy="64.600" r="5" fill="#d8d8d8" stroke="#3a3a3a" stroke-width="1"/><rect x="110.8" y="68.800" width="16.200" height="3" fill="#d8d8d8"/><circle cx="114.60000000000001" cy="65.600" r="2.500" fill="#3a3a3a"/><circle cx="114.60000000000001" cy="65.600" r="1.200" fill="#f4f4f4"/><circle cx="123.0" cy="64.600" r="2.900" fill="#3a3a3a"/><circle cx="123.0" cy="64.600" r="1.400" fill="#f4f4f4"/><rect x="113.60000000000001" y="73" width="3.600" height="3" fill="#3a3a3a"/><rect x="114.5" y="73.900" width="1.400" height="1.200" fill="#9a9a9a"/><rect x="116.8" y="70" width="4.600" height="1" fill="#3a3a3a"/><path d="M126.80000000000001 70.8v10M121.80000000000001 75.8h10" stroke="#444444" stroke-width="4" fill="none"/><path d="M126.80000000000001 71.39999999999999v8.800M122.4 75.8h8.800" stroke="#45c1c1" stroke-width="2.400" fill="none"/>
<path d="M149.8 75.200C149.8 72.200 145.7 70.800 145.7 66.200A7.300 7.300 0 0 1 160.3 66.200C160.3 70.800 156.2 72.200 156.2 75.200Z" fill="#45c1c1" stroke="#3a3a3a" stroke-width="0.700"/><rect x="149.8" y="75.600" width="6.400" height="1.300" fill="#e8e8e8"/><rect x="149.8" y="77.400" width="6.400" height="1.300" fill="#c4c4c4"/><path d="M150 79.200H156L154.6 81.400H151.4Z" fill="#a8a8a8"/>
<path d="M148.600 64.600A4.600 4.600 0 0 1 151.400 61.400" fill="none" stroke="#2c6f70" stroke-width="1.200" stroke-linecap="round"/>
<polygon points="183.59,62.35 185.10,58.20 186.61,62.35" fill="#45c1c1"/>
<polygon points="189.30,63.47 193.30,61.60 191.43,65.60" fill="#45c1c1"/>
<polygon points="192.55,68.29 196.70,69.80 192.55,71.31" fill="#45c1c1"/>
<polygon points="191.43,74.00 193.30,78.00 189.30,76.13" fill="#45c1c1"/>
<polygon points="186.61,77.25 185.10,81.40 183.59,77.25" fill="#45c1c1"/>
<polygon points="180.90,76.13 176.90,78.00 178.77,74.00" fill="#45c1c1"/>
<polygon points="177.65,71.31 173.50,69.80 177.65,68.29" fill="#45c1c1"/>
<polygon points="178.77,65.60 176.90,61.60 180.90,63.47" fill="#45c1c1"/>
<circle cx="185.1" cy="69.8" r="6.600" fill="#d8d8d8" stroke="#3a3a3a" stroke-width="0.600"/>
<polygon points="210.30,64.60 212.58,68.07 211.55,67.77 213.24,71.53 211.92,71.23 213.90,75.00 206.70,75.00 208.68,71.23 207.36,71.53 209.05,67.77 208.02,68.07" fill="#45c1c1"/>
<polygon points="222.70,58.80 225.74,63.33 224.37,63.03 226.62,67.87 224.86,67.57 227.50,72.40 217.90,72.40 220.54,67.57 218.78,67.87 221.03,63.03 219.66,63.33" fill="#45c1c1"/>
<polygon points="217.30,63.20 221.23,68.13 219.46,67.83 222.36,73.07 220.08,72.77 223.50,78.00 211.10,78.00 214.52,72.77 212.24,73.07 215.14,67.83 213.37,68.13" fill="#d8d8d8" stroke="#3a3a3a" stroke-width="0.7"/><rect x="216.5" y="78" width="1.600" height="3" fill="#d8d8d8"/>
<defs><pattern id="chk" width="2" height="2" patternUnits="userSpaceOnUse"><rect width="2" height="2" fill="#3a3a3a"/><rect width="1" height="1" fill="#45c1c1"/><rect x="1" y="1" width="1" height="1" fill="#45c1c1"/></pattern><clipPath id="lh"><rect x="236" y="56" width="12.400" height="28"/></clipPath><clipPath id="rh"><rect x="249.400" y="56" width="14" height="28"/></clipPath></defs>
<g clip-path="url(#lh)"><polygon points="248.90,58.20 254.85,65.00 252.17,64.70 256.58,71.80 253.12,71.50 258.30,78.60 239.50,78.60 244.68,71.50 241.22,71.80 245.63,64.70 242.95,65.00" fill="url(#chk)"/><rect x="248.1" y="78.6" width="1.600" height="3" fill="url(#chk)"/></g>
<g clip-path="url(#rh)"><polygon points="248.90,58.20 254.85,65.00 252.17,64.70 256.58,71.80 253.12,71.50 258.30,78.60 239.50,78.60 244.68,71.50 241.22,71.80 245.63,64.70 242.95,65.00" fill="#d8d8d8"/><rect x="248.1" y="78.6" width="1.600" height="3" fill="#d8d8d8"/></g>
<rect x="248.400" y="60" width="1.200" height="21.600" fill="#8c8c8c"/>
<rect x="269.800" y="60" width="22" height="19.600" rx="2" fill="#d8d8d8" stroke="#3a3a3a" stroke-width="0.600"/>
<polygon points="276.60,62.20 279.51,66.67 278.20,66.37 280.36,71.13 278.67,70.83 281.20,75.60 272.00,75.60 274.53,70.83 272.84,71.13 275.00,66.37 273.69,66.67" fill="#3a3a3a"/><rect x="275.8" y="75.6" width="1.600" height="2" fill="#3a3a3a"/>
<rect x="283.600" y="63.4" width="6.400" height="1.900" fill="#3a3a3a"/>
<rect x="283.600" y="66.4" width="6.400" height="1.900" fill="#3a3a3a"/>
<rect x="283.600" y="69.4" width="6.400" height="1.900" fill="#3a3a3a"/>
<rect x="283.600" y="72.4" width="6.400" height="1.900" fill="#3a3a3a"/>
<rect x="283.600" y="75.4" width="6.400" height="1.900" fill="#3a3a3a"/>
<rect x="287.700" y="63" width="0.700" height="15" fill="#d8d8d8"/>
<path d="M306.800 59H319.600Q321.600 59 321.600 61V76L317 80.600H306.800Q304.800 80.600 304.800 78.600V61Q304.800 59 306.800 59Z" fill="#d8d8d8" stroke="#3a3a3a" stroke-width="0.600"/>
<path d="M317 80.600V76H321.600" fill="#f2f2f2" stroke="#3a3a3a" stroke-width="0.700"/>
<polygon points="313.20,61.20 316.24,66.20 314.87,65.90 317.12,71.20 315.36,70.90 318.00,76.20 308.40,76.20 311.04,70.90 309.28,71.20 311.53,65.90 310.16,66.20" fill="#3a3a3a"/><rect x="312.4" y="76.2" width="1.600" height="3" fill="#3a3a3a"/>
<path d="M339.90000000000003 64.2L337.90000000000003 62.800000000000004L334.90000000000003 68.2L337.3 67.4L333.7 71.80000000000001L336.90000000000003 71.2L335.1 74.80000000000001L338.3 73.80000000000001Z" fill="#d8d8d8"/>
<path d="M343.3 61.800000000000004L340.3 59.400000000000006L338.7 64.4Z" fill="#d8d8d8"/>
<circle cx="347.3" cy="70.4" r="7.200" fill="none" stroke="#d8d8d8" stroke-width="4.400"/>
<rect x="371.4" y="64.8" width="15.600" height="15.600" rx="1.500" fill="#444444" stroke="#b8b8b8" stroke-width="1.100"/>
<rect x="368.9" y="62.3" width="15.600" height="15.600" rx="1.500" fill="#444444" stroke="#b8b8b8" stroke-width="1.100"/>
<rect x="366.400" y="59.800" width="15.600" height="15.600" rx="1.500" fill="#444444" stroke="#d8d8d8" stroke-width="1.200"/>
<circle cx="374.400" cy="66.900" r="6" fill="#45c1c1" stroke="#262626" stroke-width="0.900"/>
<ellipse cx="371.600" cy="64" rx="1.500" ry="0.900" transform="rotate(-40 371.600 64)" fill="#1d3b3b"/>
<path d="M405.90000000000003 75.200C405.90000000000003 72.200 401.8 70.800 401.8 66.200A7.300 7.300 0 0 1 416.40000000000003 66.200C416.40000000000003 70.800 412.3 72.200 412.3 75.200Z" fill="#3c3c3c" stroke="#c6c6c6" stroke-width="1.500"/><rect x="405.90000000000003" y="75.600" width="6.400" height="1.300" fill="#e8e8e8"/><rect x="405.90000000000003" y="77.400" width="6.400" height="1.300" fill="#c4c4c4"/><path d="M406.1 79.200H412.1L410.70000000000005 81.400H407.5Z" fill="#a8a8a8"/>
<line x1="412.30" y1="66.30" x2="414.50" y2="66.30" stroke="#1e1e1e" stroke-width="1.600"/>
<line x1="411.36" y1="68.56" x2="412.92" y2="70.12" stroke="#1e1e1e" stroke-width="1.600"/>
<line x1="409.10" y1="69.50" x2="409.10" y2="71.70" stroke="#1e1e1e" stroke-width="1.600"/>
<line x1="406.84" y1="68.56" x2="405.28" y2="70.12" stroke="#1e1e1e" stroke-width="1.600"/>
<line x1="405.90" y1="66.30" x2="403.70" y2="66.30" stroke="#1e1e1e" stroke-width="1.600"/>
<line x1="406.84" y1="64.04" x2="405.28" y2="62.48" stroke="#1e1e1e" stroke-width="1.600"/>
<line x1="409.10" y1="63.10" x2="409.10" y2="60.90" stroke="#1e1e1e" stroke-width="1.600"/>
<line x1="411.36" y1="64.04" x2="412.92" y2="62.48" stroke="#1e1e1e" stroke-width="1.600"/>
<circle cx="409.100" cy="66.300" r="2.100" fill="#45c1c1"/>
<rect x="430" y="60.400" width="22" height="2.400" fill="#45c1c1"/>
<rect x="430.600" y="64.600" width="14.400" height="14.400" rx="1" fill="none" stroke="#d8d8d8" stroke-width="1.300"/>
<rect x="446.400" y="64" width="5.600" height="15.600" fill="#45c1c1"/>
<rect x="447.400" y="65.4" width="3.800" height="0.900" fill="#1f5d5d"/>
<rect x="447.400" y="67.4" width="3.800" height="0.900" fill="#1f5d5d"/>
<rect x="447.400" y="69.4" width="3.800" height="0.900" fill="#1f5d5d"/>
<rect x="447.400" y="71.4" width="3.800" height="0.900" fill="#1f5d5d"/>
<rect x="462" y="60.400" width="22" height="2.400" fill="#c4c4c4"/>
<rect x="462.600" y="64.600" width="14.400" height="14.400" rx="1" fill="#3a3a3a" stroke="#d8d8d8" stroke-width="1.300"/>
<polygon points="466,66.600 474.200,71.400 466,76.200" fill="#45c1c1"/>
<rect x="478.400" y="64" width="5.600" height="15.600" fill="#c4c4c4"/>
<rect x="479.400" y="65.4" width="3.800" height="0.900" fill="#3a3a3a"/>
<rect x="479.400" y="67.4" width="3.800" height="0.900" fill="#3a3a3a"/>
<rect x="479.400" y="69.4" width="3.800" height="0.900" fill="#3a3a3a"/>
<rect x="479.400" y="71.4" width="3.800" height="0.900" fill="#3a3a3a"/>
<rect x="494.400" y="60.600" width="21.400" height="18.600" rx="2.400" fill="none" stroke="#d8d8d8" stroke-width="1.300"/>
<path d="M504.800 60.600V79.200M494.400 69.900H515.800" stroke="#bdbdbd" stroke-width="1.300" fill="none"/>
<polygon points="501.800,65.800 509.200,70 501.800,74.200" fill="#45c1c1"/>
<path d="M531 68.400C527 65.600 524.800 70.600 529.400 73.600" fill="none" stroke="#d8d8d8" stroke-width="1.500"/>
<path d="M530.600 67.200H543C544.400 70.400 542.400 74.600 539 76.600H533.400C529.800 74.600 528.800 70.400 530.600 67.200Z" fill="none" stroke="#d8d8d8" stroke-width="1.500"/>
<path d="M543 70.400C546 69.400 545.800 65.600 548.200 65.400" fill="none" stroke="#d8d8d8" stroke-width="1.700"/>
<path d="M533.600 67V65.800Q536.800 63.400 540 65.800V67" fill="#d8d8d8"/><circle cx="536.800" cy="64" r="1.100" fill="#d8d8d8"/>
<path d="M533 68V76M535.400 68V76" stroke="#d8d8d8" stroke-width="1.300"/>
<polygon points="537.600,69 542,71.800 537.600,74.600" fill="none" stroke="#d8d8d8" stroke-width="1.200"/>
</svg>
<!--TB2-END-->

<!-- ===== COMMAND PANEL ===== -->
<div class="abs" id="cmd" style="left:1399px;top:56px;width:219px;height:900px;background:#444444;"></div>
<svg width="187" height="4" viewBox="0 0 187 4" style="left:1405px;top:58px"><line x1="0" y1="0.500" x2="187" y2="0.500" stroke="#c9c9c9" stroke-width="1" stroke-dasharray="1 1"/><line x1="1" y1="2.500" x2="187" y2="2.500" stroke="#c9c9c9" stroke-width="1" stroke-dasharray="1 1"/></svg>
<!-- tab row -->
<div class="abs" style="left:1403px;top:65px;width:192px;height:28px;background:#3b3b3b;"></div>
<div class="abs" style="left:1435px;top:66px;width:31px;height:27px;background:#444444;"></div>
<div class="abs" style="left:1498px;top:69px;width:1px;height:19px;background:#333;"></div>
<div class="abs" style="left:1530px;top:69px;width:1px;height:19px;background:#333;"></div>
<div class="abs" style="left:1562px;top:69px;width:1px;height:19px;background:#333;"></div>
<svg width="184" height="28" viewBox="1403 65 184 28" style="left:1403px;top:65px">
  <!-- create + -->
  <path d="M1419 71v16M1411 79h16" stroke="#9a9a9a" stroke-width="2" fill="none"/>
  <!-- modify -->
  <g fill="none" stroke="#3fbfc0" stroke-width="1">
    <path d="M1447 71.500h8M1447 84.500h8M1444.500 74v8M1457.500 74v8"/>
    <rect x="1443.500" y="70.500" width="2" height="2"/><rect x="1456.500" y="70.500" width="2" height="2"/>
    <rect x="1443.500" y="83.500" width="2" height="2"/><rect x="1456.500" y="83.500" width="2" height="2"/>
  </g>
  <path d="M1448 82.500q0.500,-7 7.500,-7.500" stroke="#d0d0d0" stroke-width="2" fill="none"/>
  <!-- hierarchy -->
  <rect x="1477" y="71" width="12" height="5" fill="#9a9a9a"/>
  <path d="M1483 77v3M1477.500 84v-4h11v4" stroke="#3fbfc0" stroke-width="1" fill="none"/>
  <rect x="1476" y="84" width="3" height="3" fill="#3fbfc0"/><rect x="1487" y="84" width="3" height="3" fill="#3fbfc0"/>
  <!-- motion -->
  <circle cx="1512.500" cy="78.500" r="6.500" fill="none" stroke="#2d8a8b" stroke-width="1"/>
  <circle cx="1514.500" cy="78.500" r="6.500" fill="none" stroke="#2d8a8b" stroke-width="1"/>
  <circle cx="1517.500" cy="78.500" r="6.600" fill="#9a9a9a"/>
  <!-- display -->
  <rect x="1539" y="72" width="16" height="9" fill="#9a9a9a"/>
  <rect x="1545" y="83.500" width="4" height="1" fill="#8a8a8a"/><rect x="1543" y="84.500" width="8" height="1.500" fill="#9a9a9a"/>
  <!-- utilities wrench -->
  <path d="M1576 76l9 8.500" stroke="#9a9a9a" stroke-width="2.400" fill="none" stroke-linecap="round"/>
  <path d="M1572.800 74.500a3.300 3.300 0 0 0 5.500 3a3.300 3.300 0 0 0 -2.200 -6.300l1.200 2.600l-2 2z" fill="#9a9a9a"/>
  <circle cx="1585" cy="84.500" r="0.700" fill="#444"/>
</svg>
<!-- name field + colour swatch -->
<div class="abs" style="left:1406px;top:98px;width:162px;height:20px;background:#656565;"><span class="abs" style="left:5px;top:5px;font-size:11.2px;line-height:13px;color:#f4f4f4">Box001</span></div>
<div class="abs" style="left:1572px;top:98px;width:18px;height:18px;background:#f4cbea;border:1px solid #060606;"></div>
<!-- modifier list -->
<div class="abs" style="left:1407px;top:124px;width:185px;height:19px;background:#656565;"><span class="abs" style="left:2px;top:4px;font-size:10.8px;line-height:13px;color:#f0f0f0">Modifier List</span></div>
<svg width="7" height="5" viewBox="0 0 7 5" style="left:1579px;top:131px"><polygon points="0,0 7,0 3.500,5" fill="#e0e0e0"/></svg>
<!-- stack -->
<div class="abs" style="left:1407px;top:149px;width:184px;height:124px;background:#444444;border:1px solid #f2f2f2;"></div>
<div class="abs" style="left:1408px;top:151px;width:183px;height:16px;background:#5d87c0;"><span class="abs" style="left:21px;top:2px;font-size:11px;line-height:13px;color:#ffffff">Box</span></div>
<!-- stack buttons -->
<div class="abs" style="left:1436px;top:285px;width:1px;height:16px;background:#151515;"></div>
<div class="abs" style="left:1472px;top:285px;width:1px;height:16px;background:#151515;"></div>
<div class="abs" style="left:1532px;top:285px;width:1px;height:16px;background:#151515;"></div>
<div class="abs" style="left:1443px;top:282px;width:22px;height:22px;background:#5d87c0;border-radius:3px;"></div>
<svg width="150" height="24" viewBox="1410 281 150 24" style="left:1410px;top:281px">
  <!-- pin -->
  <path d="M1412.300 298.600l5.400 -5.400" stroke="#cfcfcf" stroke-width="1.100" fill="none"/>
  <path d="M1416 291.200l2.600 -1.400 2.400 -3.800 3.400 3.400 -3.800 2.400 -1.400 2.600z" fill="#d4d4d4" stroke="#3a3a3a" stroke-width="0.500"/>
  <!-- show end result tube -->
  <path d="M1451.600 286.600h6.600M1452.900 287v12a2 2 0 0 0 4 0v-12" stroke="#2c2c2c" stroke-width="3" fill="none"/>
  <path d="M1454.900 288v11" stroke="#46c0c0" stroke-width="2.200" fill="none"/>
  <path d="M1451.600 286.600h6.600M1452.900 287v12a2 2 0 0 0 4 0v-12" stroke="#ececec" stroke-width="1.300" fill="none"/>
  <!-- make unique (disabled) -->
  <circle cx="1485.600" cy="289.200" r="3.600" fill="#565656" stroke="#2e2e2e" stroke-width="1"/>
  <g fill="none" stroke="#2e2e2e" stroke-width="1.300"><circle cx="1491" cy="296.600" r="3.800"/><circle cx="1494" cy="296.200" r="3.600"/><path d="M1490.500 289h4v3.500M1492.800 291.800l1.800 1.800 1.800 -1.800"/></g>
  <!-- trash (disabled) -->
  <path d="M1508.500 288.800h11M1511 288.400v-2h6v2M1509.800 289.600v10.400h8.400v-10.400M1512.200 291.500v6.800M1514 291.500v6.800M1515.800 291.500v6.800" stroke="#2e2e2e" stroke-width="1.300" fill="none"/>
  <!-- configure sets -->
  <rect x="1542.600" y="286" width="12.600" height="14.400" fill="#dedede"/>
  <rect x="1544.200" y="288" width="9.400" height="1.400" fill="#3a3a3a"/>
  <rect x="1544.400" y="291" width="3.600" height="3.400" fill="#3a3a3a"/><rect x="1549.800" y="291" width="3.600" height="3.400" fill="#3a3a3a"/>
  <rect x="1544.400" y="295.800" width="3.600" height="3.400" fill="#3a3a3a"/><rect x="1549.800" y="295.800" width="3.600" height="3.400" fill="#3a3a3a"/>
  <rect x="1545.400" y="292" width="1.600" height="1.400" fill="#dedede"/><rect x="1550.800" y="292" width="1.600" height="1.400" fill="#dedede"/>
  <rect x="1545.400" y="296.800" width="1.600" height="1.400" fill="#dedede"/><rect x="1550.800" y="296.800" width="1.600" height="1.400" fill="#dedede"/>
  <path d="M1556.200 286.800l-6.600 6.600" stroke="#3a3a3a" stroke-width="3.400"/>
  <path d="M1556.200 286.800l-6.400 6.400" stroke="#f5ab1a" stroke-width="2.200"/><polygon points="1548.400,294.600 1549,292.400 1550.600,294" fill="#f5ab1a"/>
</svg>
<!-- rollout separator -->
<div class="abs" style="left:1411px;top:330px;width:175px;height:1px;background:#5a5a5a;"></div>
<div class="abs" style="left:1491px;top:327px;width:15px;height:6px;background:#444444;"></div>
<svg width="11" height="4" viewBox="0 0 11 4" style="left:1493px;top:329px"><line x1="0" y1="0.500" x2="11" y2="0.500" stroke="#aaaaaa" stroke-width="1" stroke-dasharray="1 1"/><line x1="1" y1="2.500" x2="11" y2="2.500" stroke="#aaaaaa" stroke-width="1" stroke-dasharray="1 1"/></svg>
<!-- scrollbar track -->
<div class="abs" style="left:1588px;top:337px;width:5px;height:619px;background:#3d3d3d;"></div>
<!-- Parameters rollout -->
<div class="abs" style="left:1406px;top:338px;width:178px;height:208px;background:#515151;border-radius:3px;"></div>
<svg width="8" height="6" viewBox="0 0 8 6" style="left:1411px;top:344px"><polygon points="0.500,0.500 7.500,0.500 4,5.500" fill="#bdbdbd"/></svg>
<div class="abs" style="left:1425px;top:342px;font-size:11.8px;letter-spacing:0.3px;font-weight:bold;line-height:13px;color:#f2f2f2;white-space:nowrap">Parameters</div>
<svg width="5" height="5" viewBox="0 0 5 5" style="left:1571px;top:344px"><path d="M0 0.500h5M0 2.500h5M0 4.500h5" stroke="#7c7c7c" stroke-width="1" stroke-dasharray="1 1" fill="none"/></svg>
<div class="lbl" style="left:1400px;width:93px;top:366px">Length:</div>
<div class="spin" style="left:1496px;top:366px"><span>10,0</span></div>
<svg width="6" height="10" viewBox="0 0 6 10" style="left:1554px;top:368px"><polygon points="3,0.500 5.500,4 0.500,4" fill="#e6e6e6"/><polygon points="0.500,6 5.500,6 3,9.500" fill="#e6e6e6"/></svg>
<div class="lbl" style="left:1400px;width:93px;top:387px">Width:</div>
<div class="spin" style="left:1496px;top:387px"><span>10,0</span></div>
<svg width="6" height="10" viewBox="0 0 6 10" style="left:1554px;top:389px"><polygon points="3,0.500 5.500,4 0.500,4" fill="#e6e6e6"/><polygon points="0.500,6 5.500,6 3,9.500" fill="#e6e6e6"/></svg>
<div class="lbl" style="left:1400px;width:93px;top:408px">Height:</div>
<div class="spin" style="left:1496px;top:408px"><span>10,0</span></div>
<svg width="6" height="10" viewBox="0 0 6 10" style="left:1554px;top:410px"><polygon points="3,0.500 5.500,4 0.500,4" fill="#e6e6e6"/><polygon points="0.500,6 5.500,6 3,9.500" fill="#e6e6e6"/></svg>
<div class="lbl" style="left:1400px;width:93px;top:436px;letter-spacing:-0.13px">Length Segs:</div>
<div class="spin" style="left:1496px;top:436px"><span>1</span></div>
<svg width="6" height="10" viewBox="0 0 6 10" style="left:1554px;top:438px"><polygon points="3,0.500 5.500,4 0.500,4" fill="#e6e6e6"/><polygon points="0.500,6 5.500,6 3,9.500" fill="#e6e6e6"/></svg>
<div class="lbl" style="left:1400px;width:93px;top:457px;letter-spacing:-0.13px">Width Segs:</div>
<div class="spin" style="left:1496px;top:457px"><span>1</span></div>
<svg width="6" height="10" viewBox="0 0 6 10" style="left:1554px;top:459px"><polygon points="3,0.500 5.500,4 0.500,4" fill="#e6e6e6"/><polygon points="0.500,6 5.500,6 3,9.500" fill="#e6e6e6"/></svg>
<div class="lbl" style="left:1400px;width:93px;top:478px;letter-spacing:-0.13px">Height Segs:</div>
<div class="spin" style="left:1496px;top:478px"><span>1</span></div>
<svg width="6" height="10" viewBox="0 0 6 10" style="left:1554px;top:480px"><polygon points="3,0.500 5.500,4 0.500,4" fill="#e6e6e6"/><polygon points="0.500,6 5.500,6 3,9.500" fill="#e6e6e6"/></svg>

<!-- checkboxes -->
<div class="abs" style="left:1425px;top:504px;width:12px;height:13px;background:#666666;box-shadow:0 0 0 1px #4b4b4b;"></div>
<svg width="12" height="13" viewBox="0 0 12 13" style="left:1425px;top:504px"><path d="M2.200 5.800l2.200 3.200 5.400 -6.200" stroke="#e8e8e8" stroke-width="1.500" fill="none"/></svg>
<div class="abs" style="left:1425px;top:526px;width:12px;height:13px;background:#666666;box-shadow:0 0 0 1px #4b4b4b;"></div>
<div class="lbl" style="left:1441px;top:505px;text-align:left;letter-spacing:-0.18px">Generate Mapping Coords.</div>
<div class="lbl" style="left:1441px;top:527px;text-align:left;letter-spacing:-0.18px">Real-World Map Size</div>
<!-- annotation: red box + arrow -->
<div class="abs" style="left:1446px;top:357px;width:115px;height:65px;border:3px solid #ff0000;border-radius:2px;"></div>
<svg width="140" height="40" viewBox="1305 390 140 40" style="left:1305px;top:390px">
  <line x1="1312.400" y1="422.600" x2="1428" y2="399.800" stroke="#ff0000" stroke-width="2.600" stroke-linecap="round"/>
  <polygon points="1439.800,397.500 1424.400,395.500 1426.600,405" fill="#ff0000"/>
</svg>

<!-- ===== RIGHT ICON STRIP ===== -->
<!--ST-START-->
<svg id="strip" width="22" height="440" viewBox="1596 54 22 440" style="left:1596px;top:54px;overflow:hidden">
<defs>
<radialGradient id="gsph" cx="0.64" cy="0.36" r="0.72"><stop offset="0" stop-color="#ffffff"/><stop offset="0.1" stop-color="#e8eeff"/><stop offset="0.2" stop-color="#8fa2e0"/><stop offset="0.5" stop-color="#5a6eb2"/><stop offset="0.8" stop-color="#242d5a"/><stop offset="1" stop-color="#0a0c1c"/></radialGradient>
<linearGradient id="gcyl" x1="0" x2="1"><stop offset="0" stop-color="#222b58"/><stop offset="0.35" stop-color="#4a5c9e"/><stop offset="0.55" stop-color="#8ea4e6"/><stop offset="0.7" stop-color="#5468ac"/><stop offset="1" stop-color="#2c376a"/></linearGradient>
<radialGradient id="ggeo" cx="0.55" cy="0.4" r="0.7"><stop offset="0" stop-color="#90a4e2"/><stop offset="0.6" stop-color="#5164a6"/><stop offset="1" stop-color="#1c2448"/></radialGradient>
<radialGradient id="ghlp" cx="0.5" cy="0.4" r="0.65"><stop offset="0" stop-color="#e8e2c8"/><stop offset="0.7" stop-color="#a89c84"/><stop offset="1" stop-color="#5a4634"/></radialGradient>
<pattern id="chk2" width="4" height="4" patternUnits="userSpaceOnUse"><rect width="4" height="4" fill="#ffffff"/><rect width="2" height="2" fill="#111"/><rect x="2" y="2" width="2" height="2" fill="#111"/></pattern>
</defs>
<line x1="1598" y1="58.500" x2="1618" y2="58.500" stroke="#c9c9c9" stroke-width="1" stroke-dasharray="1 1"/><line x1="1599" y1="60.500" x2="1618" y2="60.500" stroke="#c9c9c9" stroke-width="1" stroke-dasharray="1 1"/>
<ellipse cx="1612" cy="88" rx="8" ry="1.800" fill="#383838"/>
<circle cx="1611.500" cy="79.200" r="8.600" fill="url(#gsph)"/>
<path d="M1604.800 103.300V117.500Q1612 123.500 1620 117.500V103.300Z" fill="url(#gcyl)"/>
<ellipse cx="1612.300" cy="103.300" rx="7.600" ry="3.200" fill="#7f93d8" stroke="#a8b8f0" stroke-width="0.500"/>
<path d="M1604.800 106L1603 110L1604.800 115" fill="none" stroke="#3a3a3a" stroke-width="1.200"/>
<rect x="1603.400" y="133" width="16" height="18" fill="#15183a"/>
<rect x="1604.60" y="134.20" width="3.200" height="3.200" fill="#93a3ea"/>
<rect x="1604.60" y="138.40" width="3.200" height="3.200" fill="#93a3ea"/>
<rect x="1604.60" y="143.10" width="3.200" height="3.200" fill="#93a3ea"/>
<rect x="1604.60" y="147.30" width="3.200" height="3.200" fill="#93a3ea"/>
<rect x="1608.70" y="134.20" width="3.200" height="3.200" fill="#93a3ea"/>
<rect x="1608.70" y="138.40" width="3.200" height="3.200" fill="#93a3ea"/>
<rect x="1608.70" y="143.10" width="3.200" height="3.200" fill="#93a3ea"/>
<rect x="1608.70" y="147.30" width="3.200" height="3.200" fill="#93a3ea"/>
<rect x="1613.40" y="134.20" width="3.200" height="3.200" fill="#93a3ea"/>
<rect x="1613.40" y="138.40" width="3.200" height="3.200" fill="#93a3ea"/>
<rect x="1613.40" y="143.10" width="3.200" height="3.200" fill="#93a3ea"/>
<rect x="1613.40" y="147.30" width="3.200" height="3.200" fill="#93a3ea"/>
<rect x="1617.50" y="134.20" width="3.200" height="3.200" fill="#93a3ea"/>
<rect x="1617.50" y="138.40" width="3.200" height="3.200" fill="#93a3ea"/>
<rect x="1617.50" y="143.10" width="3.200" height="3.200" fill="#93a3ea"/>
<rect x="1617.50" y="147.30" width="3.200" height="3.200" fill="#93a3ea"/>
<rect x="1603.400" y="151" width="16" height="1.500" fill="#383838"/>
<circle cx="1612.100" cy="172.800" r="9.700" fill="none" stroke="#0c0c0c" stroke-width="1.500"/>
<circle cx="1602.4" cy="172.9" r="2" fill="#4fb2f6"/><circle cx="1602.4" cy="172.9" r="0.900" fill="#d8f0ff"/>
<circle cx="1611.8" cy="163.2" r="2" fill="#4fb2f6"/><circle cx="1611.8" cy="163.2" r="0.900" fill="#d8f0ff"/>
<circle cx="1611.8" cy="182.4" r="2" fill="#4fb2f6"/><circle cx="1611.8" cy="182.4" r="0.900" fill="#d8f0ff"/>
<path d="M1602 194H1618" stroke="#0c0c0c" stroke-width="1.500"/>
<path d="M1604.200 207.200C1602.200 201 1605 197.600 1608.600 197.600C1613.400 197.600 1614.400 201.400 1613.400 206C1612.400 211 1613.400 215.400 1618 215.600" fill="none" stroke="#0c0c0c" stroke-width="1.500"/>
<circle cx="1602" cy="194" r="1.600" fill="#4fb2f6"/><circle cx="1602" cy="194" r="0.700" fill="#d8f0ff"/>
<circle cx="1604.3" cy="207.3" r="1.600" fill="#4fb2f6"/><circle cx="1604.3" cy="207.3" r="0.700" fill="#d8f0ff"/>
<ellipse cx="1609" cy="240" rx="8" ry="5" fill="#3a3a3a"/>
<polygon points="1602.400,229.700 1609.700,223.900 1620,227 1616.500,233.900" fill="#8497dc"/>
<polygon points="1602.400,229.700 1616.500,233.900 1616.500,245 1604,239.200" fill="#4b5b9c"/>
<polygon points="1616.500,233.900 1620,227 1620,240 1616.500,245" fill="#27305c"/>
<path d="M1602.400 229.700L1616.500 233.900V245" fill="none" stroke="#10142c" stroke-width="0.700"/>
<line x1="1598" y1="254.500" x2="1618" y2="254.500" stroke="#c9c9c9" stroke-width="1" stroke-dasharray="1 1"/><line x1="1599" y1="256.500" x2="1618" y2="256.500" stroke="#c9c9c9" stroke-width="1" stroke-dasharray="1 1"/>
<circle cx="1611.800" cy="275.700" r="10.200" fill="url(#ghlp)" stroke="#5a3a22" stroke-width="1"/>
<path d="M1611.800 266V285.500M1602 275.700H1621" stroke="#6a3a1a" stroke-width="1.400"/>
<polygon points="1611.800,265.200 1609.600,268.200 1614,268.200" fill="#101010"/><polygon points="1611.800,286.200 1609.600,283.200 1614,283.200" fill="#6a3a1a"/><polygon points="1601.600,275.700 1604.400,273.700 1604.400,277.700" fill="#6a3a1a"/>
<rect x="1606.600" y="270.600" width="10.400" height="10.400" fill="#f8d858" stroke="#8a5a1a" stroke-width="0.800"/>
<rect x="1607.600" y="271.600" width="8.400" height="4" fill="#fdf0a8" opacity="0.700"/>
<circle cx="1611.800" cy="275.800" r="1.700" fill="#141008"/>
<circle cx="1612.300" cy="307.100" r="10.400" fill="url(#ggeo)" stroke="#141a34" stroke-width="0.800"/>
<path d="M1602 304H1622M1602.600 310.500H1622M1607 298V316M1612.500 296.700V317.500M1617.500 298V316" stroke="#7f92d4" stroke-width="0.500" opacity="0.600"/>
<rect x="1612.500" y="304" width="5" height="6.500" fill="#a3b4ee" opacity="0.550"/>
<polygon points="1601.400,335.600 1610.500,329.700 1620,333 1620,347 1617,348.600 1602.800,342" fill="#5468ac"/>
<polygon points="1601.400,335.600 1610.500,329.700 1620,333 1617,340.800" fill="#8ea2e4"/>
<polygon points="1605,335.600 1610.800,332 1618,334.500 1616,338.600" fill="#4a5c9e"/>
<polygon points="1617,340.800 1620,333 1620,347 1617,348.600" fill="#2a3464"/>
<path d="M1601.400 335.600L1617 340.800V348.600" fill="none" stroke="#141a34" stroke-width="0.700"/>
<polygon points="1601.500,362.500 1612,358.300 1620,361 1620,376 1613.500,378.700 1603,374.500" fill="#f1d27a" stroke="#5a3210" stroke-width="0.900"/>
<path d="M1601.500 362.500L1613.500 366.500V378.700M1613.500 366.500L1620 361M1607 360.400L1607.800 376.500M1602.200 368.500L1613.500 372.500L1620 368M1607.300 364.500L1620 363.500" fill="none" stroke="#6a3c12" stroke-width="0.900"/>
<circle cx="1603" cy="363.5" r="1.300" fill="#3a1c08"/>
<circle cx="1613.5" cy="366.8" r="1.300" fill="#3a1c08"/>
<circle cx="1607.6" cy="370.5" r="1.300" fill="#3a1c08"/>
<circle cx="1608" cy="360.6" r="1.300" fill="#3a1c08"/>
<circle cx="1613.5" cy="377.5" r="1.300" fill="#3a1c08"/>
<circle cx="1603.4" cy="373.8" r="1.300" fill="#3a1c08"/>
<polygon points="1604,366 1606,366.700 1606,369 1604,368.300" fill="#fff6cf"/><polygon points="1609.500,373.500 1612,374.300 1612,376.600 1609.500,375.800" fill="#fff6cf"/>
<polygon points="1602.300,390.500 1611,389.700 1611,406.500 1600.800,405" fill="#b9b9b9"/>
<polygon points="1602.300,390.500 1611,389.700 1611,392 1602.100,392.800" fill="#dedede"/>
<polygon points="1612.200,389.200 1620,391 1620,407.500 1612.200,406.600" fill="#2f8fdc"/>
<rect x="1610.400" y="390.600" width="2.400" height="5.600" rx="1" fill="#9ac6ee"/><rect x="1610.400" y="399" width="2.400" height="6.600" rx="1" fill="#e8e8e8"/>
<circle cx="1605" cy="394.500" r="1" fill="#4a4a4a"/><circle cx="1604.600" cy="402.500" r="1" fill="#4a4a4a"/><circle cx="1616.500" cy="396" r="1" fill="#17507c"/>
<line x1="1598" y1="420.500" x2="1618" y2="420.500" stroke="#c9c9c9" stroke-width="1" stroke-dasharray="1 1"/><line x1="1599" y1="422.500" x2="1618" y2="422.500" stroke="#c9c9c9" stroke-width="1" stroke-dasharray="1 1"/>
<polygon points="1603,446 1611,440 1620,443.500 1620,449 1612,453.500" fill="url(#chk2)"/>
<polygon points="1603,446 1611,440 1620,443.500 1620,449 1612,453.500" fill="none" stroke="#222" stroke-width="0.800"/>
<polygon points="1600.800,435.300 1612,430.500 1620,432.800 1620,436 1611.500,440.800" fill="#f1d392" stroke="#8a5a20" stroke-width="0.900"/>
<rect x="1601" y="466.500" width="18" height="10.500" fill="none" stroke="#0c0c0c" stroke-width="1.600" stroke-dasharray="1.500 1.200"/>
<polygon points="1602.500,467 1612,461.500 1620,465 1620,473 1612.500,478" fill="#d81c1c"/>
<polygon points="1602.500,467 1612,461.500 1620,465 1620,467 1612.200,470.800" fill="#2fd23e"/>
<path d="M1607.300 464.300L1616.500 468.800M1606 470L1616 465M1607.500 472.500L1620 467.500M1612.300 470.800V478" stroke="#5a0808" stroke-width="0.700" fill="none"/>
</svg>
<!--ST-END-->

</body>
</html>
